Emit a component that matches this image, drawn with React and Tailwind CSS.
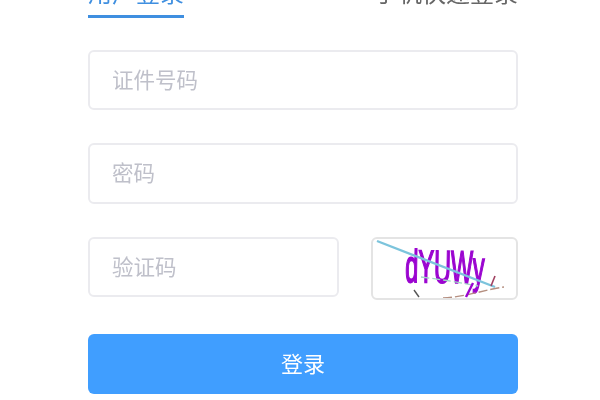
export default function App() {
  return (
    <div className="w-[600px] h-[400px] overflow-hidden bg-white font-['Liberation_Sans','Noto_Sans_CJK_SC',sans-serif] blur-[0.5px]">
      <div className="w-[430px] ml-[88px] -mt-[18px] flex flex-col">
        <div className="flex justify-between items-start h-[36px]">
          <div className="w-[96px] h-[36px] border-b-[3px] border-[#3f8fe0] text-[#3f8fe0] text-[24px] leading-[24px] text-center whitespace-nowrap">用户登录</div>
          <div className="text-[#666] text-[24px] leading-[24px] whitespace-nowrap">手机快速登录</div>
        </div>
        <input placeholder="证件号码" className="mt-[32px] w-full h-[60px] pt-[2px] px-[22px] border-2 border-[#ebebef] rounded-md outline-none text-[21.5px] placeholder:text-[#bfc0ca]" />
        <input placeholder="密码" className="mt-[33px] w-full h-[61px] pt-[2px] px-[22px] border-2 border-[#ebebef] rounded-md outline-none text-[21.5px] placeholder:text-[#bfc0ca]" />
        <div className="mt-[33px] flex justify-between items-start">
          <input placeholder="验证码" className="w-[251px] h-[60px] pt-[2px] px-[22px] border-2 border-[#ebebef] rounded-md outline-none text-[21.5px] placeholder:text-[#bfc0ca]" />
          <div className="-ml-px w-[147px] h-[63px] border-2 border-[#e4e4e4] rounded-md overflow-hidden">
            <svg width="143" height="59" viewBox="0 0 143 59">
              <text x="0" y="0" fill="#9b05d0" stroke="#9b05d0" strokeWidth="1.8" fontFamily="Liberation Sans" fontSize="46" transform="translate(32 43) rotate(1) scale(0.51 1)">dYUWy</text>
              <path d="M4 2 L122 48" stroke="#7cc4dc" strokeWidth="2.4" fill="none" />
              <path d="M48 38 Q80 42 105 47" stroke="#9fd8c4" strokeWidth="1.3" strokeDasharray="8 3" fill="none" />
              <path d="M70 59 C92 58 115 50 131 48" stroke="#b58f80" strokeWidth="1.4" strokeDasharray="9 3" fill="none" />
              <path d="M41 51 L46 58" stroke="#555" strokeWidth="1.4" fill="none" />
              <path d="M118 47 L122 37" stroke="#a04060" strokeWidth="1.6" fill="none" />
              <path d="M93 58 L100 44" stroke="#9b05d0" strokeWidth="2.4" fill="none" />
            </svg>
          </div>
        </div>
        <button className="mt-[34px] w-full h-[60px] rounded-md bg-[#409eff] text-white text-[22px]">登录</button>
      </div>
    </div>
  );
}
